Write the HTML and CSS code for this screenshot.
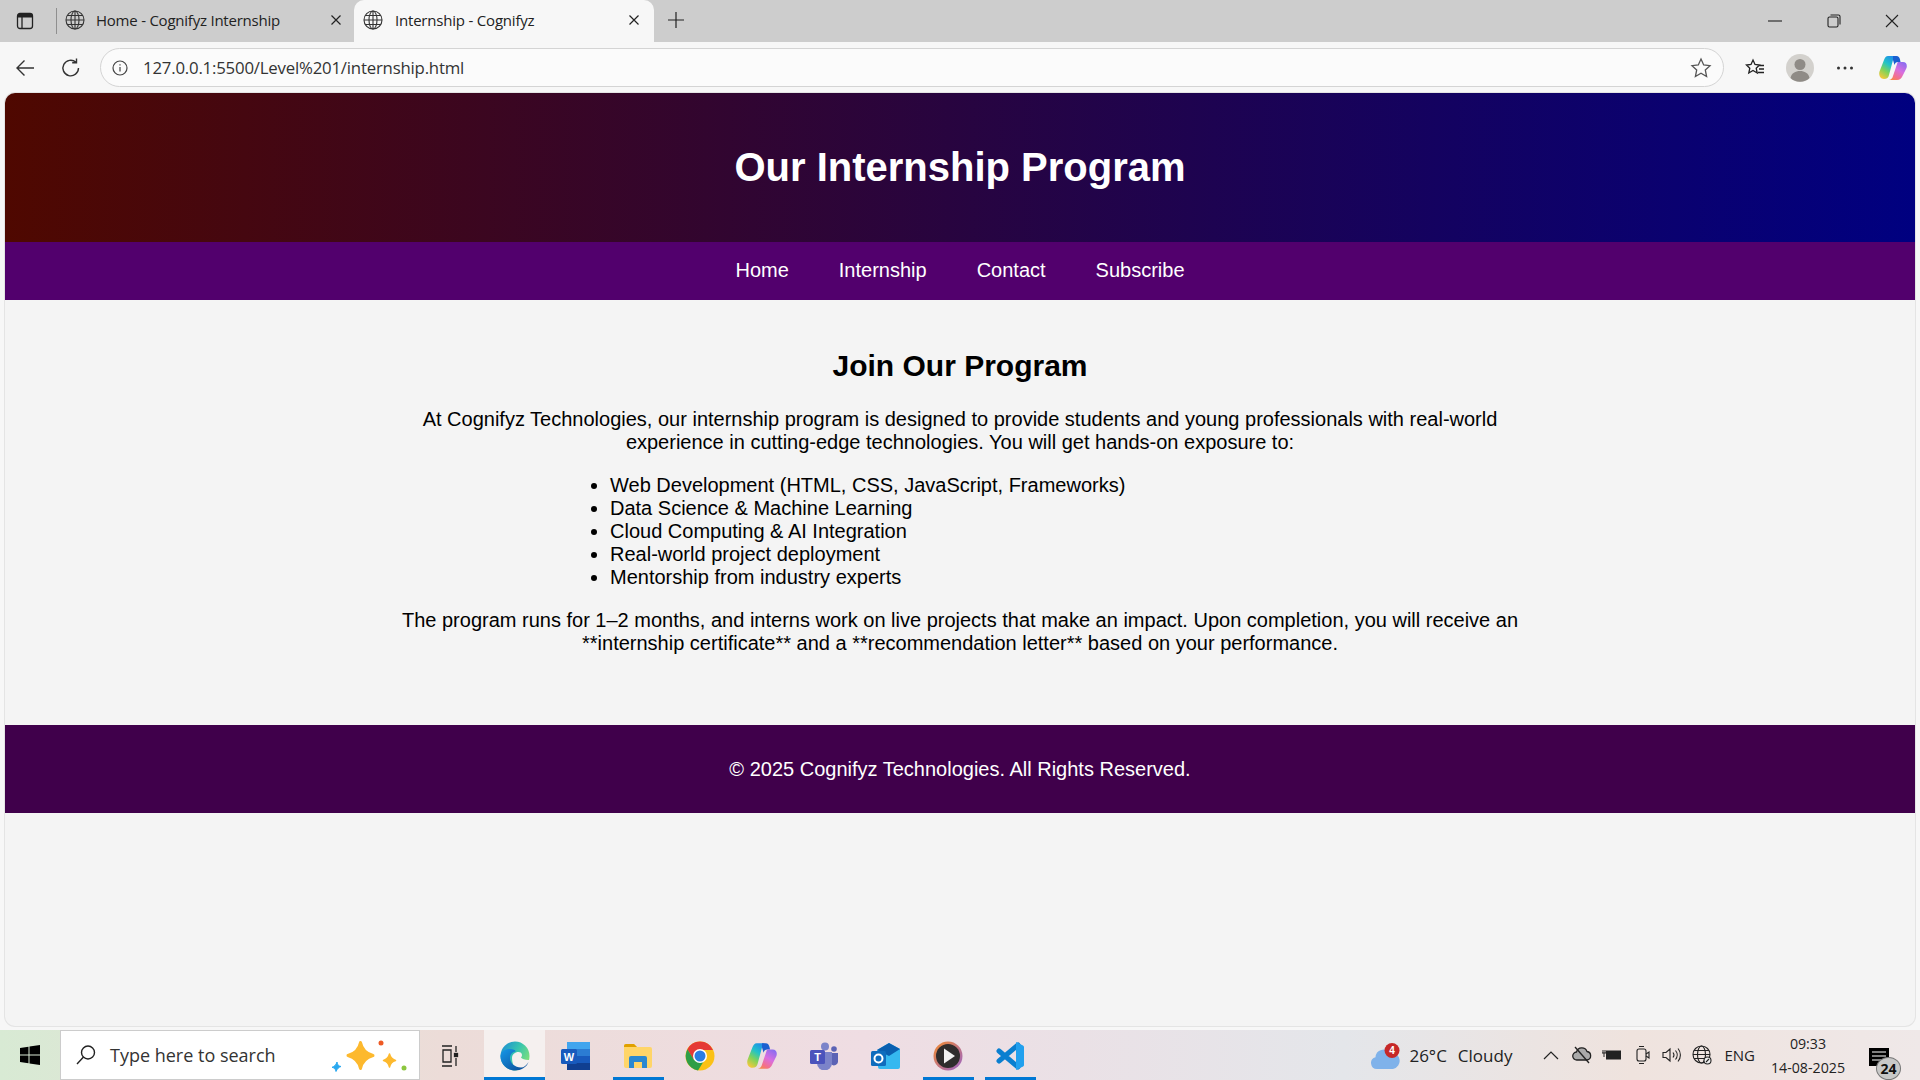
FILE: index.html
```html
<!DOCTYPE html>
<html lang="en">
<head>
<meta charset="utf-8">
<title>Internship - Cognifyz</title>
<link rel="stylesheet" href="styles.css">
</head>
<body>
<div class="tabstrip">
  <svg class="sidebar" width="20" height="20" viewBox="0 0 20 20"><rect x="2.500" y="2.500" width="15" height="15" rx="2.500" fill="none" stroke="#222" stroke-width="1.300"/><path d="M2.500 6.500V5a2.500 2.500 0 0 1 2.500-2.500h10A2.500 2.500 0 0 1 17.500 5v1.500z" fill="#222"/><path d="M7 6v11" stroke="#222" stroke-width="1.300"/></svg>
  <span class="tabsep"></span>
  <div class="tab">
    <svg width="20" height="20" viewBox="0 0 20 20" fill="none" stroke="#333" stroke-width="1.100"><circle cx="10" cy="10" r="9"/><ellipse cx="10" cy="10" rx="4" ry="9"/><path d="M1 10h18M2.200 5.500h15.600M2.200 14.500h15.600M10 1v18"/></svg>
    <span class="tabtitle first">Home - Cognifyz Internship</span>
    <svg width="12" height="12" viewBox="0 0 12 12" stroke="#222" stroke-width="1.200"><path d="M1.500 1.500l9 9M10.500 1.500l-9 9"/></svg>
  </div>
  <div class="tab active">
    <svg width="20" height="20" viewBox="0 0 20 20" fill="none" stroke="#333" stroke-width="1.100"><circle cx="10" cy="10" r="9"/><ellipse cx="10" cy="10" rx="4" ry="9"/><path d="M1 10h18M2.200 5.500h15.600M2.200 14.500h15.600M10 1v18"/></svg>
    <span class="tabtitle">Internship - Cognifyz</span>
    <svg width="12" height="12" viewBox="0 0 12 12" stroke="#222" stroke-width="1.200"><path d="M1.500 1.500l9 9M10.500 1.500l-9 9"/></svg>
  </div>
  <svg class="newtab" width="18" height="18" viewBox="0 0 18 18" stroke="#222" stroke-width="1.200"><path d="M9 1v16M1 9h16"/></svg>
  <div class="winctl">
    <svg width="14" height="14" viewBox="0 0 14 14" stroke="#222" stroke-width="1.100"><path d="M0 7h14"/></svg>
    <svg width="14" height="14" viewBox="0 0 14 14" fill="none" stroke="#222" stroke-width="1.100"><rect x="1" y="3" width="10" height="10" rx="1.500"/><path d="M3.500 1H11.500a1.500 1.500 0 0 1 1.500 1.500V10.500"/></svg>
    <svg width="14" height="14" viewBox="0 0 14 14" stroke="#222" stroke-width="1.100"><path d="M1 1l12 12M13 1L1 13"/></svg>
  </div>
</div>
<div class="toolbar">
  <svg width="22" height="22" viewBox="0 0 22 22" fill="none" stroke="#333" stroke-width="1.400"><path d="M20 11H3M10.500 3.500L3 11l7.500 7.500"/></svg>
  <svg class="tb-reload" width="22" height="22" viewBox="0 0 22 22" fill="none" stroke="#333" stroke-width="1.400"><path d="M18.500 11a7.800 7.800 0 1 1-2.500-5.700M16.500 1.500v4.300h-4.300"/></svg>
  <div class="omnibox">
    <svg width="16" height="16" viewBox="0 0 16 16" fill="none" stroke="#444" stroke-width="1.200"><circle cx="8" cy="8" r="7"/><path d="M8 7v4.500M8 4.200v1.300"/></svg>
    <span class="url">127.0.0.1:5500/Level%201/internship.html</span>
    <svg width="22" height="22" viewBox="0 0 22 22" fill="none" stroke="#555" stroke-width="1.300"><path d="M11 2l2.700 6 6.300.700-4.700 4.300 1.300 6.500L11 16.300 5.400 19.500l1.300-6.500L2 8.700 8.300 8z"/></svg>
  </div>
  <svg class="favs" width="22" height="22" viewBox="0 0 22 22" fill="none" stroke="#222" stroke-width="1.300"><path d="M9 3l2 4.500 4.500.500-3.300 3.200 1 4.800L9 13.500 4.800 16l1-4.800L2.500 8 7 7.500zM15 8.500h5M15 12h5M14 15.500h6"/></svg>
  <svg class="avatar" width="28" height="28" viewBox="0 0 28 28"><circle cx="14" cy="14" r="14" fill="#d3d1cd"/><circle cx="14" cy="10.500" r="5.500" fill="#8f8b86"/><path d="M4.500 24c1-5 5-7 9.500-7s8.500 2 9.500 7a14 14 0 0 1-19 0z" fill="#8f8b86"/></svg>
  <svg class="more" width="18" height="6" viewBox="0 0 18 6" fill="#333"><circle cx="2.500" cy="3" r="1.500"/><circle cx="9" cy="3" r="1.500"/><circle cx="15.500" cy="3" r="1.500"/></svg>
  <svg class="copilot" width="28" height="28" viewBox="0 0 28 28">
    <defs>
      <linearGradient id="cpa" x1="0.700" y1="0" x2="0.200" y2="1"><stop offset="0" stop-color="#1f8fe8"/><stop offset=".35" stop-color="#22c3c8"/><stop offset=".65" stop-color="#7fd35a"/><stop offset="1" stop-color="#f7c83a"/></linearGradient>
      <linearGradient id="cpb" x1="0.800" y1="0" x2="0.200" y2="1"><stop offset="0" stop-color="#8a6cf0"/><stop offset=".45" stop-color="#d86ee0"/><stop offset=".8" stop-color="#f4708a"/><stop offset="1" stop-color="#f58a4a"/></linearGradient>
      <g id="cpshape">
        <path d="M9 2H17C15 2.500 14.500 4 14 6L10 21C9.500 23.500 8 25 5 25 C1 25 -.5 21 .5 17.500 L5 6C6 3.500 7 2 9 2z" fill="url(#cpa)"/>
        <path d="M14 2H17.500C19.500 2 20.500 3.500 21 5.500L21.500 8H19C17 8 16 9 15.500 11L14 6z" fill="#1a5fd0"/>
        <path d="M19 8H24C27 8 28.500 10.500 27.500 14L24 21C22.500 24.500 21 26 18 26H10C12.500 25.500 13.500 24 14 22L18 10C18.300 9 18.500 8.300 19 8z" fill="url(#cpb)"/>
      </g>
    </defs>
    <use href="#cpshape"/>
  </svg>
</div>
<div class="viewport">
  <div class="page">
    <header class="hero"><h1>Our Internship Program</h1></header>
    <nav class="mainnav">
      <a>Home</a><a>Internship</a><a>Contact</a><a>Subscribe</a>
    </nav>
    <main class="content">
      <h2>Join Our Program</h2>
      <p>At Cognifyz Technologies, our internship program is designed to provide students and young professionals with real-world experience in cutting-edge technologies. You will get hands-on exposure to:</p>
      <ul>
        <li>Web Development (HTML, CSS, JavaScript, Frameworks)</li>
        <li>Data Science &amp; Machine Learning</li>
        <li>Cloud Computing &amp; AI Integration</li>
        <li>Real-world project deployment</li>
        <li>Mentorship from industry experts</li>
      </ul>
      <p>The program runs for 1–2 months, and interns work on live projects that make an impact. Upon completion, you will receive an **internship certificate** and a **recommendation letter** based on your performance.</p>
    </main>
    <footer class="foot">© 2025 Cognifyz Technologies. All Rights Reserved.</footer>
  </div>
</div>
<div class="taskbar">
  <div class="startbtn"><svg width="20" height="20" viewBox="0 0 20 20" fill="#000"><path d="M0 3l8.500-1.200V9.500H0zM9.500 1.600L20 0v9.500H9.500zM0 10.500h8.500v7.700L0 17zM9.500 10.500H20V20L9.500 18.400z"/></svg></div>
  <div class="searchbox">
    <svg width="22" height="22" viewBox="0 0 22 22" fill="none" stroke="#222" stroke-width="1.400"><circle cx="13" cy="8.500" r="6.500"/><path d="M8.500 13L2 20"/></svg>
    <span class="searchtext">Type here to search</span>
    <svg class="sparkle" width="78" height="34" viewBox="0 0 78 34"><path d="M30.500 2.500C32 10 36 13.500 43 15.500C36 17.500 32 21 30.500 28.500C29 21 25 17.500 18 15.500C25 13.500 29 10 30.500 2.500z" fill="#fdb92e" stroke="#fdb92e" stroke-width="3" stroke-linejoin="round"/><path d="M59.500 14C60.300 17.500 62 19.500 65.500 20.500C62 21.500 60.300 23.500 59.500 27C58.700 23.500 57 21.500 53.500 20.500C57 19.500 58.700 17.500 59.500 14z" fill="#fdb92e" stroke="#fdb92e" stroke-width="1.500" stroke-linejoin="round"/><path d="M7 22C7.400 25 8.500 26 11 26.500C8.500 27.300 7.500 28.500 6 31.500C5.600 29 4.500 28 2 27.300C4.500 26.500 6 25 7 22z" fill="#2aa9f0" stroke="#2aa9f0" stroke-linejoin="round"/><circle cx="51" cy="3" r="2.500" fill="#ee5a24"/><circle cx="74" cy="28" r="2.500" fill="#8cc63f"/></svg>
  </div>
  <div class="tbicon tv"><svg width="20" height="24" viewBox="0 0 20 24" fill="none" stroke="#222" stroke-width="1.300"><path d="M1 2h10M1 22h10M2 6h8v12H2zM15 2v6M15 14v8"/><rect x="13.500" y="9.500" width="3" height="3" fill="#222"/></svg></div>
  <div class="tbicon on edge"><svg width="30" height="30" viewBox="0 0 30 30"><defs><linearGradient id="edg" x1="0" y1="0" x2="1" y2="0.600"><stop offset="0" stop-color="#1b87d8"/><stop offset=".55" stop-color="#36c4b0"/><stop offset="1" stop-color="#7fe07a"/></linearGradient><linearGradient id="eds" x1="0.800" y1="1" x2="0" y2="0.200"><stop offset="0" stop-color="#0a4f9a"/><stop offset="1" stop-color="#1590e0"/></linearGradient></defs><circle cx="15" cy="15" r="14.500" fill="url(#edg)"/><path class="edgehole" d="M12 17C12 13.500 15 11 18.500 11C22 11 23 14.500 21 16.500C22 18 26 19.500 30 19V30H18C14 27 12 22 12 17z"/><path d="M.5 15C1 10 6 7.500 11 8C15 8.500 16 10 15.500 10.500C12 11 10 14 10 17C10 22 15 26.500 21 26.500C24 26.500 26.500 24.500 28.500 21C26.500 26.500 21 29.500 15 29.500C7 29.500 .5 23 .5 15z" fill="url(#eds)"/></svg></div>
  <div class="tbicon"><svg width="30" height="30" viewBox="0 0 30 30"><rect x="6" y="1" width="23" height="28" rx="2" fill="#2b7cd3"/><rect x="6" y="1" width="23" height="7" fill="#41a5ee"/><rect x="6" y="15" width="23" height="7" fill="#185abd"/><rect x="6" y="22" width="23" height="7" fill="#103f91"/><rect x="0" y="8" width="16" height="15" rx="1.500" fill="#185abd"/><text x="8" y="20" class="iconletter">W</text></svg></div>
  <div class="tbicon on"><svg width="30" height="26" viewBox="0 0 30 26"><path d="M1 3a2 2 0 0 1 2-2h8l3 3h13a2 2 0 0 1 2 2v17a2 2 0 0 1-2 2H3a2 2 0 0 1-2-2z" fill="#ffd568"/><path d="M1 3a2 2 0 0 1 2-2h8l3 3H1z" fill="#e0a000"/><path d="M6 25v-10a2 2 0 0 1 2-2h14a2 2 0 0 1 2 2v10h-5v-6h-8v6z" fill="#2a88d0"/></svg></div>
  <div class="tbicon"><svg width="30" height="30" viewBox="0 0 30 30"><circle cx="15" cy="15" r="14.500" fill="#fbc116"/><path d="M15 .500A14.500 14.500 0 0 0 2.400 8.200L9 19.500 15 9h13A14.500 14.500 0 0 0 15 .500z" fill="#e53935"/><path d="M2.400 8.200A14.500 14.500 0 0 0 13 29.400L19.500 19H9z" fill="#2e9e47"/><circle cx="15" cy="15" r="7" fill="#fff"/><circle cx="15" cy="15" r="5.500" fill="#2a7de1"/></svg></div>
  <div class="tbicon"><svg width="30" height="30" viewBox="0 0 28 28"><use href="#cpshape"/></svg></div>
  <div class="tbicon"><svg width="28" height="28" viewBox="0 0 28 28"><circle cx="15" cy="4.500" r="4" fill="#7b83c9"/><circle cx="24" cy="7" r="2.800" fill="#5b63b5"/><path d="M20 11h8v8a4 4 0 0 1-7 3z" fill="#5b63b5"/><path d="M7 10h15v11a7 7 0 0 1-15 0z" fill="#7b83c9"/><rect x="0" y="8" width="15" height="14" rx="1.500" fill="#4b53bc"/><text x="7.500" y="19" class="iconletter">T</text></svg></div>
  <div class="tbicon"><svg width="30" height="28" viewBox="0 0 30 28"><path d="M6 8L18 1l11 6v18a2 2 0 0 1-2 2H9a2 2 0 0 1-2-2z" fill="#35b8f0"/><path d="M6 8L18 1l11 6-11 7z" fill="#0a5fb0"/><rect x="0" y="9" width="15" height="15" rx="1.500" fill="#0f6cbd"/><circle cx="7.500" cy="16.500" r="4" fill="none" stroke="#fff" stroke-width="2"/></svg></div>
  <div class="tbicon on"><svg width="30" height="30" viewBox="0 0 30 30"><defs><linearGradient id="ply" x1="0" y1="0" x2="1" y2="1"><stop offset="0" stop-color="#f28a2e"/><stop offset="1" stop-color="#9a63c9"/></linearGradient></defs><circle cx="15" cy="15" r="14.500" fill="url(#ply)"/><circle cx="15" cy="15" r="12" fill="#2f2d2d"/><path d="M11 7.500L22 15l-11 7.500z" fill="#f2f2f2"/></svg></div>
  <div class="tbicon on"><svg width="30" height="30" viewBox="0 0 30 30"><path d="M23 4L4 20M23 26L4 10" fill="none" stroke="#0a7fd0" stroke-width="5" stroke-linecap="round"/><path d="M21 1L28 4.500Q29 5 29 6V24Q29 25 28 25.500L21 29z" fill="#22a0ee"/></svg></div>
  <div class="tray">
    <div class="weather">
      <svg width="30" height="30" viewBox="0 0 30 30"><path d="M7 29a6 6 0 0 1-1.500-11.800A8 8 0 0 1 20 13a7.500 7.500 0 0 1 3 16z" fill="#7fb2ea"/><circle cx="22" cy="10.500" r="7.500" fill="#c62828"/><text x="22" y="14" class="badgenum">4</text></svg>
      <span>26°C</span><span class="cloudy">Cloudy</span>
    </div>
    <svg class="t-chev" width="16" height="10" viewBox="0 0 16 10" fill="none" stroke="#222" stroke-width="1.200"><path d="M1 9l7-7 7 7"/></svg>
    <svg class="t-cloud" width="20" height="18" viewBox="0 0 20 18" fill="none" stroke="#222" stroke-width="1.300"><path d="M5 14a4 4 0 0 1-.500-8 5.500 5.500 0 0 1 10.500-.500A4.300 4.300 0 0 1 15 14z" fill="#aaa"/><path d="M3 1l14 16"/></svg>
    <svg class="t-batt" width="20" height="14" viewBox="0 0 20 14"><rect x="4" y="2.500" width="15" height="9" fill="#222"/><path d="M0 5h4M1 2v3M3 2v3M2 5v4" stroke="#222" fill="none"/></svg>
    <svg class="t-cam" width="14" height="20" viewBox="0 0 14 20" fill="none" stroke="#222" stroke-width="1.100"><rect x="1" y="4" width="9" height="12" rx="2"/><path d="M10 9l3-2v6l-3-2M3 1.500h5M3 18.500h5"/></svg>
    <svg class="t-spk" width="19" height="18" viewBox="0 0 19 18" fill="none" stroke="#222" stroke-width="1.100"><path d="M1 6.500h3L8 3v12l-4-3.500H1zM11 6.500a4 4 0 0 1 0 5M13.500 4.500a7 7 0 0 1 0 9M16 2.500a10 10 0 0 1 0 13"/></svg>
    <svg class="t-globe" width="20" height="20" viewBox="0 0 20 20" fill="none" stroke="#222" stroke-width="1.100"><circle cx="9.500" cy="9.500" r="8.500"/><ellipse cx="9.500" cy="9.500" rx="4" ry="8.500"/><path d="M1 9.500h17M2 5.500h15M2 13.500h15"/><circle cx="15.500" cy="15.500" r="3.500" fill="#eee"/><path d="M14 17l3-3"/></svg>
    <span class="lang">ENG</span>
    <div class="clock"><span>09:33</span><span>14-08-2025</span></div>
    <div class="notif">
      <svg width="20" height="18" viewBox="0 0 20 18"><rect width="20" height="18" fill="#000"/><path d="M3 4h14M3 8h14M3 12h9" stroke="#fff"/></svg>
      <span class="notifcount">24</span>
    </div>
  </div>
</div>
</body>
</html>
```
FILE: styles.css
```css
* { box-sizing: border-box; }
html, body { margin: 0; padding: 0; height: 100%; overflow: hidden; }
body {
  width: 1920px;
  height: 1080px;
  display: flex;
  flex-direction: column;
  font-family: "Liberation Sans", Arial, sans-serif;
  background: #f7f7f7;
}
svg { display: block; flex: none; }

.tabstrip {
  height: 42px;
  flex: none;
  background: #cdcdcd;
  display: flex;
  align-items: flex-end;
  padding-left: 15px;
}
.sidebar { align-self: center; margin-right: 21px; }
.tabsep { width: 1px; height: 26px; background: #8f8f8f; align-self: center; margin-right: 8px; }
.tab {
  width: 289px;
  height: 42px;
  display: flex;
  align-items: center;
  padding: 0 12.500px 3px 0;
  font-family: "Open Sans", "Noto Sans", sans-serif;
  font-size: 15px;
  color: #222;
}
.tab.active {
  background: #f7f7f7;
  border-radius: 10px 10px 0 0;
  width: 300px;
  padding: 0 14px 3px 9px;
}
.tabtitle { margin-left: 12px; flex: 1; letter-spacing: -0.2px; }
.tabtitle.first { margin-left: 11px; letter-spacing: -0.23px; }
.newtab { align-self: center; margin-left: 12.500px; margin-bottom: 3px; }
.winctl {
  margin-left: auto;
  align-self: center;
  display: flex;
  gap: 44.500px;
  padding-right: 21px;
}

.toolbar {
  height: 51px;
  flex: none;
  background: #f7f7f7;
  display: flex;
  align-items: center;
  padding-left: 14px;
}
.tb-reload { margin-left: 24px; }
.omnibox {
  width: 1624px;
  height: 39px;
  margin-left: 18px;
  border: 1px solid #d4d4d4;
  border-radius: 20px;
  background: #fbfbfb;
  display: flex;
  align-items: center;
  padding: 0 11px;
}
.url {
  margin-left: 15px;
  font-family: "Open Sans", "Noto Sans", sans-serif;
  font-size: 16.800px;
  color: #333;
  letter-spacing: -0.2px;
  flex: 1;
}
.favs { margin-left: 20px; }
.avatar { margin-left: 20px; }
.more { margin-left: 22px; }
.copilot { margin-left: 25px; }

.viewport {
  flex: none;
  height: 937px;
  padding: 0 5px;
  background: #f7f7f7;
}
.page {
  height: 933px;
  background: #f4f4f4;
  border-radius: 10px;
  overflow: hidden;
  box-shadow: 0 0 0 1px #e4e4e4;
  color: #000;
  font-size: 20px;
}
.hero {
  height: 149px;
  background: linear-gradient(to right, #4f0800, #000080);
  display: flex;
  align-items: center;
  justify-content: center;
}
.hero h1 { margin: 0; color: #fff; font-size: 40px; font-weight: 700; }
.mainnav {
  height: 58px;
  padding-bottom: 2px;
  background: #52006d;
  display: flex;
  align-items: center;
  justify-content: center;
  gap: 50px;
}
.mainnav a { color: #fff; font-size: 20px; }
.content {
  width: 1120px;
  margin: 0 auto;
  padding-top: 49px;
  text-align: center;
  height: 425px;
}
.content h2 { margin: 0 0 25px; font-size: 30px; line-height: 34px; font-weight: 700; }
.content p { margin: 20px 0; line-height: 23px; }
.content ul { margin: 20px 0; padding-left: 210px; text-align: left; }
.content li { line-height: 23px; }
.foot {
  height: 88px;
  background: #40004b;
  color: #fff;
  font-size: 20px;
  display: flex;
  align-items: center;
  justify-content: center;
}

.taskbar {
  height: 50px;
  flex: none;
  display: flex;
  align-items: stretch;
  background: linear-gradient(to right, #d8ead4 0, #ecdcd8 23%, #efdde3 45%, #e4e6ea 70%, #efe3de 85%, #efe8e8 100%);
}
.startbtn { width: 60px; display: flex; align-items: center; justify-content: center; }
.searchbox {
  width: 360px;
  background: #fff;
  border: 1px solid #ccc;
  display: flex;
  align-items: center;
  padding-left: 14px;
  font-family: "Open Sans", "Noto Sans", sans-serif;
  font-size: 18px;
  color: #333;
}
.searchtext { margin-left: 13px; flex: 1; }
.sparkle { margin-right: 11px; margin-top: 4px; }
.tbicon {
  position: relative;
  width: 62px;
  display: flex;
  align-items: center;
  justify-content: center;
  padding-top: 1px;
}
.tbicon.tv { width: 64px; padding-right: 3px; }
.tbicon.on::after {
  content: "";
  position: absolute;
  left: 6px;
  right: 5px;
  bottom: 0;
  height: 3px;
  background: #0078d4;
}
.tbicon.edge { width: 61px; background: #f5f0ef; }
.tbicon.edge::after { left: 0; right: 0; }
.edgehole { fill: #f5f0ef; }
.iconletter { fill: #fff; font-family: "Liberation Sans", sans-serif; font-size: 11px; font-weight: 700; text-anchor: middle; }
.badgenum { fill: #fff; font-family: "Liberation Sans", sans-serif; font-size: 10px; font-weight: 700; text-anchor: middle; }
.tray {
  margin-left: auto;
  display: flex;
  align-items: center;
  padding-right: 19px;
  font-family: "Open Sans", "Noto Sans", sans-serif;
  color: #222;
}
.weather { display: flex; align-items: center; gap: 9px; font-size: 17px; }
.cloudy { margin-left: 2px; }
.t-chev { margin-left: 31px; }
.t-cloud { margin-left: 13px; }
.t-batt { margin-left: 10px; }
.t-cam { margin-left: 14px; }
.t-spk { margin-left: 12px; }
.t-globe { margin-left: 11px; }
.lang { font-size: 15px; margin-left: 12px; }
.clock {
  display: flex;
  flex-direction: column;
  align-items: center;
  gap: 5px;
  font-size: 14.200px;
  margin-left: 16px;
}
.notif {
  position: relative;
  width: 32px;
  height: 32px;
  margin-left: 24px;
  align-self: flex-start;
  margin-top: 18px;
}
.notifcount {
  position: absolute;
  left: 7px;
  top: 9px;
  width: 25px;
  height: 23px;
  border-radius: 50%;
  background: #c8c8c8;
  border: 1px solid #777;
  font-size: 14px;
  font-weight: 700;
  color: #111;
  display: flex;
  align-items: center;
  justify-content: center;
}
```
